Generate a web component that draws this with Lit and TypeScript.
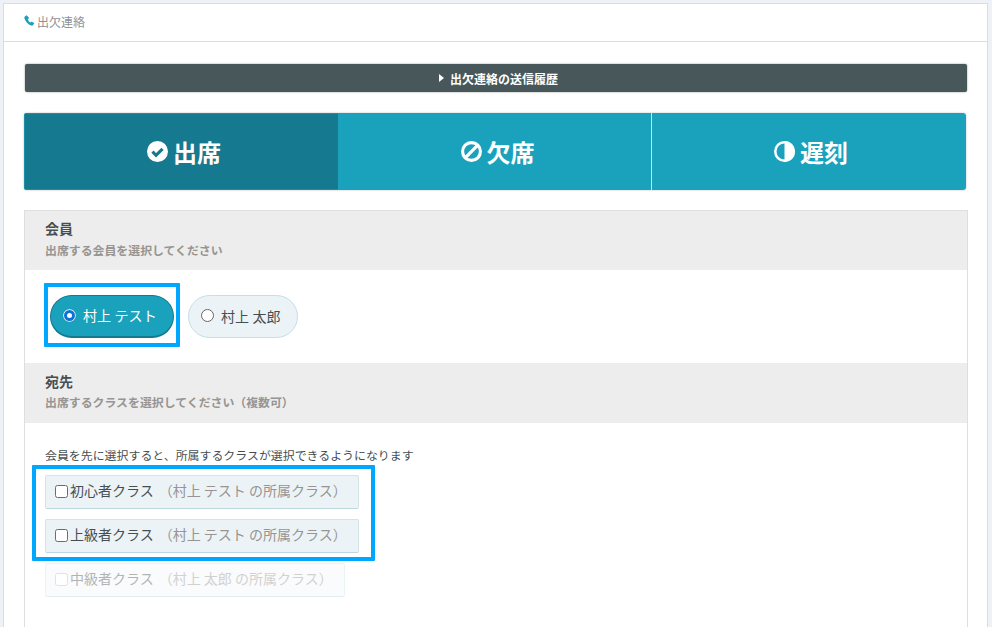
import { LitElement, html, css, svg } from "lit";
import { customElement } from "lit/decorators.js";

const check = svg`<svg class="ti" viewBox="0 0 20 20"><circle cx="10" cy="10" r="10" fill="#fff"/><path d="M5.200 10.200l3.400 3.400 6.200-6.200" fill="none" stroke="#157a8f" stroke-width="3"/></svg>`;
const ban = svg`<svg class="ti" viewBox="0 0 20 20"><circle cx="10" cy="10" r="8.500" fill="none" stroke="#fff" stroke-width="3"/><path d="M4.500 15.500L15.500 4.500" stroke="#fff" stroke-width="3"/></svg>`;
const half = svg`<svg class="ti" viewBox="0 0 20 20"><circle cx="10" cy="10" r="8.800" fill="none" stroke="#fff" stroke-width="2.400"/><path d="M10 0a10 10 0 0 1 0 20z" fill="#fff"/></svg>`;

@customElement("app-root")
export class AppRoot extends LitElement {
  static styles = css`
    :host { display: block; height: 627px; overflow: hidden; background: #eef1f5; padding: 3px 4px 0 3px; box-sizing: border-box;
      font-family: "Noto Sans CJK JP", "Noto Sans", sans-serif; color: #454f53; }
    .card { background: #fff; border: 1px solid #d8dde1; border-bottom: 0; height: 700px; box-sizing: border-box; }
    .head { border-bottom: 1px solid #d8dde1; display: flex; align-items: center; padding: 0 0 3px 20px; box-sizing: border-box; height: 38px; font-size: 12px; color: #8e9296; gap: 2px; }
    .head svg { width: 11px; height: 11px; fill: #1aa2bd; margin-top: -1px; }
    .body { padding: 22px 19px 0 20px; }
    .bar { height: 28px; margin: 0 1px; background: #47575a; border-radius: 2px; box-shadow: 0 0 2px rgba(0,0,0,.45); color: #fff; font-size: 12px; font-weight: 700; display: flex; align-items: center; justify-content: center; gap: 6px; padding-left: 5px; }
    .bar i { width: 0; height: 0; border-left: 5px solid #fff; border-top: 4px solid transparent; border-bottom: 4px solid transparent; }
    .tabs { margin: 21px 2px 0 0; height: 77px; display: grid; grid-template-columns: 314px 313px 1fr; border-radius: 3px; overflow: hidden; box-shadow: 0 0 2px rgba(0,0,0,.3); }
    .tab { background: #1aa2bd; color: #fff; font-size: 24px; font-weight: 700; display: flex; align-items: center; justify-content: center; gap: 5px; line-height: 1; padding-left: 6px; }
    .tab.on { background: #157a8f; box-shadow: inset 1px 0 0 #1a8ea6, inset 0 -1px 0 #1a8ea6, inset 0 1px 0 #1a8ea6; }
    .tab + .tab + .tab { border-left: 1px solid #cfe3e8; padding-left: 4px; }
    .ti { width: 21px; height: 21px; flex: none; }
    .panel { position: relative; margin-top: 20px; border: 1px solid #dedede; border-bottom: 0; height: 460px; }
    .sh { background: #ededed; padding: 7px 20px 0; box-sizing: border-box; height: 59px; }
    .sh b { display: block; font-size: 14px; line-height: 20px; color: #454f53; }
    .sh span { display: block; font-size: 11.900px; font-weight: 700; line-height: 20px; margin-top: 2px; color: #979491; }
    .radios { display: flex; gap: 14px; padding: 25px 0 25px 25px; height: 43px; }
    .pill { display: flex; align-items: center; height: 43px; box-sizing: border-box; border-radius: 22px; padding: 0 16px 2px 12px; gap: 7px; font-size: 14px; background: #ebf3f6; border: 1px solid #c3dfe7; white-space: nowrap; letter-spacing: .1px; }
    .pill.on { background: #1aa2bd; color: #fff; border: 1px solid #147a8e; border-width: 1px 1px 2px; width: 124px; padding: 0 0 3px 12px; gap: 6px; }
    .dot { width: 13px; height: 13px; border-radius: 50%; box-sizing: border-box; border: 1.500px solid #666; background: #fff; flex: none; }
    .on .dot { background: #fff; border: 3px solid #0b72db; box-shadow: 0 0 0 .75px #fff; width: 11px; height: 11px; margin: 2px 2px 0 1px; }
    .sec2 { height: 60px; padding-top: 8px; }
    .sec2 span { margin-top: 1px; }
    .note { font-size: 11.930px; line-height: 20px; padding: 22px 20px 0; color: #454f53; }
    .list { display: flex; flex-direction: column; gap: 10px; padding: 10px 0 0 20px; align-items: flex-start; }
    .chk { height: 34px; box-sizing: border-box; width: 314px; background: #ebf3f6; border: 1px solid #d3e4e9; border-bottom-color: #bcd9e2; border-radius: 2px; display: flex; align-items: center; padding: 0 0 4px 9px; font-size: 14px; white-space: nowrap; }
    .chk i { width: 13px; height: 13px; box-sizing: border-box; border: 1.300px solid #6b6b6b; border-radius: 2.500px; background: #fff; flex: none; margin: 2px 2px 0 0; }
    .chk em { font-style: normal; color: #979491; margin-left: 5px; }
    .chk.off { width: 300px; opacity: .42; background: #f1f6f8; }
    .chk.off i { border-color: #bbb; }
    .mark { position: absolute; border: 4px solid #00a7ff; box-sizing: border-box; border-radius: 1px; pointer-events: none; }
    .m1 { left: 19px; top: 72px; width: 136px; height: 64px; }
    .m2 { left: 7px; top: 254px; width: 343px; height: 96px; }
  `;

  render() {
    return html`<div class="card">
      <div class="head"><svg viewBox="0 0 16 16"><path d="M4 .5 1.600 1.800C.6 2.400.3 3.600.7 5c1.400 4.600 5.300 8.900 9.600 10.300 1.300.4 2.300.1 3-.8l1.700-2.500-3.800-2.700-1.900 1.700C7.700 10 6.200 8 5.600 6l1.800-1.500z"/></svg>出欠連絡</div>
      <div class="body">
        <div class="bar"><i></i>出欠連絡の送信履歴</div>
        <div class="tabs">
          <div class="tab on">${check}出席</div>
          <div class="tab">${ban}欠席</div>
          <div class="tab">${half}遅刻</div>
        </div>
        <div class="panel">
          <div class="sh"><b>会員</b><span>出席する会員を選択してください</span></div>
          <div class="radios">
            <div class="pill on"><span class="dot"></span>村上 テスト</div>
            <div class="pill"><span class="dot"></span>村上 太郎</div>
          </div>
          <div class="sh sec2"><b>宛先</b><span>出席するクラスを選択してください（複数可）</span></div>
          <div class="note">会員を先に選択すると、所属するクラスが選択できるようになります</div>
          <div class="list">
            <div class="chk"><i></i>初心者クラス<em>（村上 テスト の所属クラス）</em></div>
            <div class="chk"><i></i>上級者クラス<em>（村上 テスト の所属クラス）</em></div>
            <div class="chk off"><i></i>中級者クラス<em>（村上 太郎 の所属クラス）</em></div>
          </div>
          <div class="mark m1"></div>
          <div class="mark m2"></div>
        </div>
      </div>
    </div>`;
  }
}
